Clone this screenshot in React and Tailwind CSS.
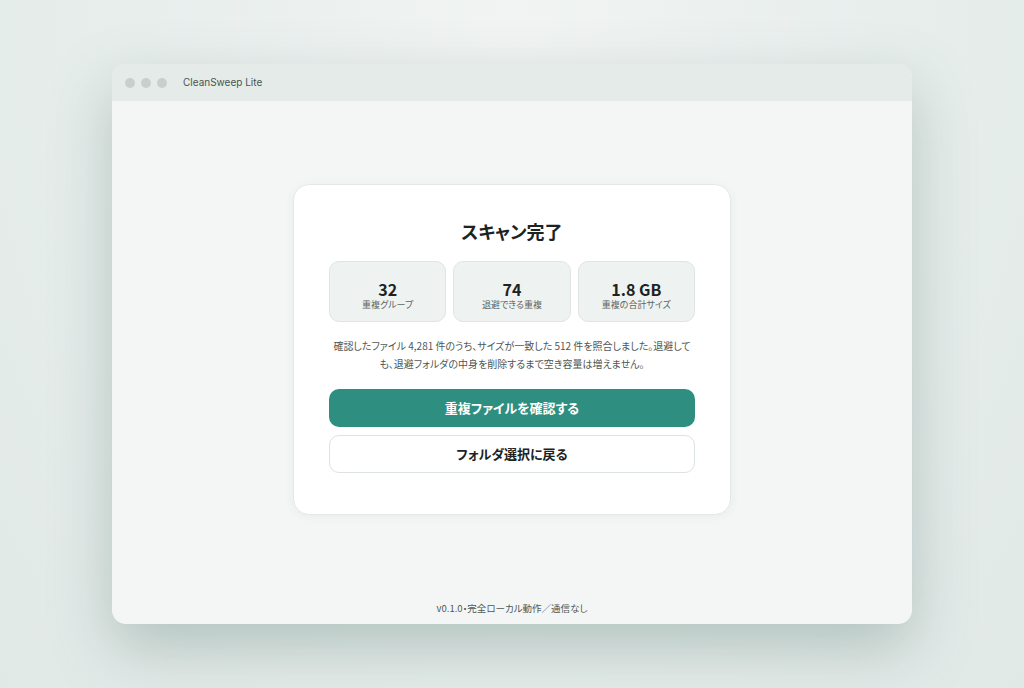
const Stat = ({ value, label }) => (
  <div className="flex flex-col items-center rounded-[10px] border border-[#dfe5e3] bg-[#eef2f1] pt-[18px] h-[61px]">
    <div className="text-[16px] font-bold leading-[18px] text-[#1c2321]">{value}</div>
    <div className="mt-[1px] text-[9px] leading-[12px] text-[#5d6663]">{label}</div>
  </div>
)

export default function App() {
  return (
    <div
      className="flex h-[688px] w-full justify-center bg-[radial-gradient(ellipse_at_top,#f1f4f3_0%,#e6edeb_60%,#e1e9e7_100%)] pt-[64px] [font-family:'Noto_Sans_CJK_JP','Noto_Sans',sans-serif] [font-feature-settings:'palt']"
    >
      <div className="flex h-[560px] w-[800px] flex-col overflow-hidden rounded-[14px] bg-[#f4f6f5] shadow-[0_24px_60px_rgba(90,120,112,0.35)]">
        <div className="flex h-[37px] shrink-0 items-center bg-[#e5ebe9] pl-[13px]">
          <div className="flex gap-[6px]">
            <span className="h-[10px] w-[10px] rounded-full bg-[#c8d0ce]" />
            <span className="h-[10px] w-[10px] rounded-full bg-[#c8d0ce]" />
            <span className="h-[10px] w-[10px] rounded-full bg-[#c8d0ce]" />
          </div>
          <span className="ml-[16px] text-[10px] text-[#4a5351] [font-family:Inter,sans-serif]">CleanSweep Lite</span>
        </div>

        <div className="flex flex-1 items-center justify-center">
          <div className="w-[438px] rounded-[16px] border border-[#e3e8e6] bg-white px-[35px] pt-[33px] pb-[41px] shadow-[0_2px_10px_rgba(60,90,80,0.06)]">
            <h1 className="text-center text-[18px] font-bold leading-[26px] text-[#1c2321]">スキャン完了</h1>
            <div className="mt-[17px] grid grid-cols-3 gap-[7px]">
              <Stat value="32" label="重複グループ" />
              <Stat value="74" label="退避できる重複" />
              <Stat value="1.8 GB" label="重複の合計サイズ" />
            </div>
            <p className="mt-[15px] text-center text-[10px] leading-[18px] text-[#4f5855]">
              確認したファイル 4,281 件のうち、サイズが一致した 512 件を照合しました。退避しても、退避フォルダの中身を削除するまで空き容量は増えません。
            </p>
            <button className="mt-[16px] flex h-[38px] w-full items-center justify-center rounded-[10px] bg-[#2e8f80] text-[13px] font-bold text-white">
              重複ファイルを確認する
            </button>
            <button className="mt-[8px] flex h-[38px] w-full items-center justify-center rounded-[10px] border border-[#dde3e1] bg-white text-[13px] font-bold text-[#1c2321]">
              フォルダ選択に戻る
            </button>
          </div>
        </div>

        <div className="pt-[3px] pb-[9px] text-center text-[9.5px] leading-[14px] text-[#4f5855]">
          v0.1.0・完全ローカル動作／通信なし
        </div>
      </div>
    </div>
  )
}
